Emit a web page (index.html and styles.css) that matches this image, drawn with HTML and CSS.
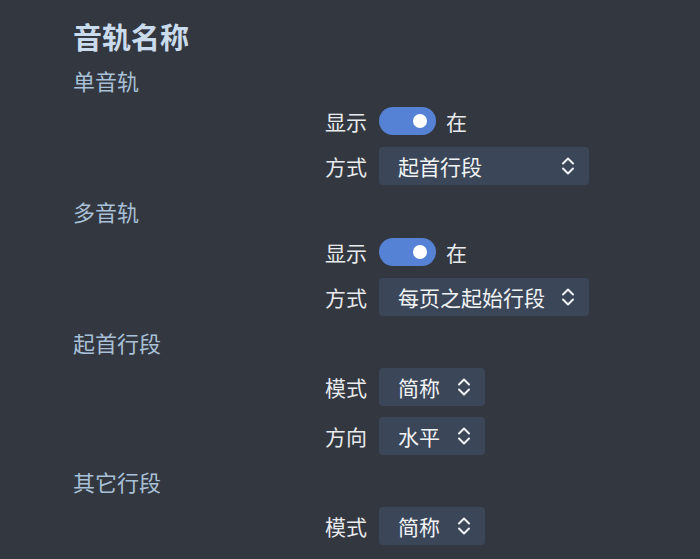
FILE: index.html
```html
<!DOCTYPE html>
<html lang="zh">
<head>
<meta charset="utf-8">
<link rel="stylesheet" href="styles.css">
</head>
<body>
<div class="page">
  <h1 class="title">音轨名称</h1>

  <div class="section">单音轨</div>
  <div class="row toggle-row">
    <span class="label">显示</span>
    <span class="switch"><span class="knob"></span></span>
    <span class="state">在</span>
  </div>
  <div class="row">
    <span class="label">方式</span>
    <span class="select wide"><span class="value">起首行段</span><svg class="chev" viewBox="0 0 14 20" width="14" height="20"><path d="M2 7.5 L7 2.5 L12 7.5 M2 12.5 L7 17.5 L12 12.5"/></svg></span>
  </div>

  <div class="section">多音轨</div>
  <div class="row toggle-row">
    <span class="label">显示</span>
    <span class="switch"><span class="knob"></span></span>
    <span class="state">在</span>
  </div>
  <div class="row">
    <span class="label">方式</span>
    <span class="select wide"><span class="value">每页之起始行段</span><svg class="chev" viewBox="0 0 14 20" width="14" height="20"><path d="M2 7.5 L7 2.5 L12 7.5 M2 12.5 L7 17.5 L12 12.5"/></svg></span>
  </div>

  <div class="section">起首行段</div>
  <div class="row">
    <span class="label">模式</span>
    <span class="select"><span class="value">简称</span><svg class="chev" viewBox="0 0 14 20" width="14" height="20"><path d="M2 7.5 L7 2.5 L12 7.5 M2 12.5 L7 17.5 L12 12.5"/></svg></span>
  </div>
  <div class="row">
    <span class="label">方向</span>
    <span class="select"><span class="value">水平</span><svg class="chev" viewBox="0 0 14 20" width="14" height="20"><path d="M2 7.5 L7 2.5 L12 7.5 M2 12.5 L7 17.5 L12 12.5"/></svg></span>
  </div>

  <div class="section">其它行段</div>
  <div class="row">
    <span class="label">模式</span>
    <span class="select"><span class="value">简称</span><svg class="chev" viewBox="0 0 14 20" width="14" height="20"><path d="M2 7.5 L7 2.5 L12 7.5 M2 12.5 L7 17.5 L12 12.5"/></svg></span>
  </div>
</div>
</body>
</html>
```

FILE: styles.css
```css
html, body {
  margin: 0;
  padding: 0;
  background: #33373f;
  height: 100%;
}

body {
  font-family: "Noto Sans CJK SC", "Noto Sans", sans-serif;
  color: #e6e8ec;
  overflow: hidden;
}

.page {
  display: flex;
  flex-direction: column;
  gap: 11px;
  padding: 18px 0 0 73px;
}

.title {
  margin: 0;
  font-size: 29px;
  line-height: 36px;
  font-weight: 700;
  color: #c9dbec;
}

.section {
  font-size: 22px;
  line-height: 30px;
  height: 30px;
  color: #a9c1d8;
}

.row {
  display: flex;
  align-items: center;
  gap: 12px;
  height: 38px;
  padding-left: 252px;
  font-size: 21px;
}

.toggle-row {
  height: 30px;
}

.label {
  width: 42px;
  line-height: 38px;
  color: #e8eaee;
  white-space: nowrap;
}

.switch {
  position: relative;
  width: 57px;
  height: 28px;
  border-radius: 14px;
  background: #5682d6;
  flex: none;
}

.knob {
  position: absolute;
  top: 7px;
  right: 9px;
  width: 14px;
  height: 14px;
  border-radius: 50%;
  background: #ffffff;
}

.state {
  margin-left: -2px;
  color: #e8eaee;
}

.select {
  display: flex;
  align-items: center;
  justify-content: space-between;
  box-sizing: border-box;
  height: 38px;
  padding: 0 14px 0 19px;
  border-radius: 4px;
  background: #3b4759;
  color: #f2f3f5;
  width: 106px;
}

.select.wide {
  width: 210px;
}

.value {
  white-space: nowrap;
  line-height: 38px;
}

.chev {
  flex: none;
  fill: none;
  stroke: #eef0f3;
  stroke-width: 2;
  stroke-linecap: round;
  stroke-linejoin: round;
}
```
